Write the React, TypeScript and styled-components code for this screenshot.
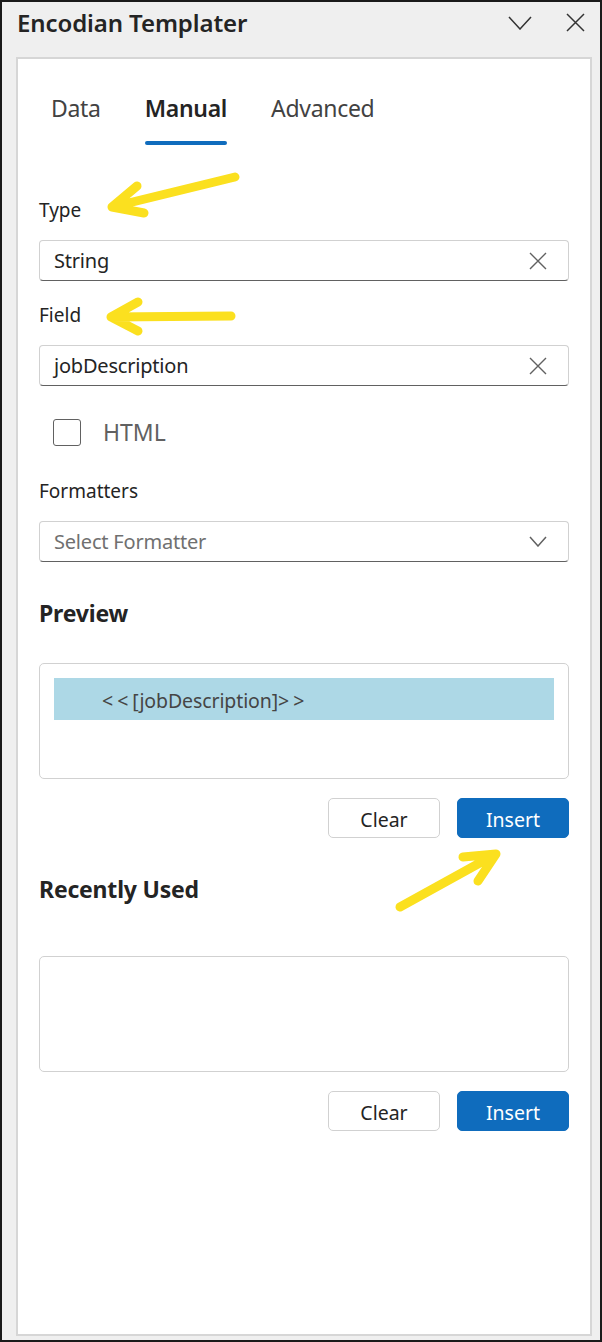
import styled, { createGlobalStyle } from "styled-components";

const GlobalStyle = createGlobalStyle`
  html, body {
    margin: 0;
    padding: 0;
    background: #ffffff;
  }
  body {
    font-family: "Noto Sans", "Open Sans", "Liberation Sans", sans-serif;
    color: #242424;
  }
  * { box-sizing: border-box; }
`;

const Frame = styled.div`
  position: relative;
  width: 602px;
  height: 1342px;
  border: 2px solid #1a1a1a;
  background: #efefef;
  display: flex;
  flex-direction: column;
`;

const TitleBar = styled.div`
  height: 55px;
  display: flex;
  align-items: center;
  justify-content: space-between;
  padding: 0 15px 14px 15px;
`;

const Title = styled.span`
  font-size: 24px;
  line-height: 32px;
  font-weight: 600;
  color: #242424;
  letter-spacing: -0.1px;
`;

const TitleActions = styled.div`
  display: flex;
  align-items: center;
  gap: 34px;
  color: #333333;
`;

const Panel = styled.div`
  flex: 1;
  margin: 0 8px 4px 14px;
  border: 2px solid #d6d6d6;
  background: #ffffff;
  padding: 0 21px;
  display: flex;
  flex-direction: column;
`;

const TabList = styled.div`
  display: flex;
  gap: 20px;
  padding-top: 32px;
`;

const Tab = styled.div<{ $active?: boolean }>`
  display: flex;
  flex-direction: column;
  padding: 0 12px;
  font-size: 23px;
  line-height: 34px;
  font-weight: ${(p) => (p.$active ? 600 : 400)};
  color: ${(p) => (p.$active ? "#242424" : "#424242")};
  letter-spacing: -0.3px;
`;

const Indicator = styled.div<{ $active?: boolean }>`
  height: 4px;
  margin-top: 16px;
  border-radius: 2px;
  background: ${(p) => (p.$active ? "#0f6cbd" : "transparent")};
`;

const Label = styled.div<{ $top: number }>`
  margin-top: ${(p) => p.$top}px;
  margin-bottom: 17px;
  font-size: 19px;
  line-height: 26px;
  color: #242424;
`;

const InputBox = styled.div`
  height: 41px;
  border: 1px solid #d1d1d1;
  border-bottom-color: #616161;
  border-radius: 4px;
  display: flex;
  align-items: center;
  justify-content: space-between;
  padding: 0 21px 0 14px;
  font-size: 20px;
`;

const InputText = styled.span<{ $muted?: boolean }>`
  color: ${(p) => (p.$muted ? "#707070" : "#242424")};
  letter-spacing: -0.2px;
`;

const CheckRow = styled.label`
  display: flex;
  align-items: center;
  gap: 22px;
  margin-top: 32px;
  padding-left: 14px;
  height: 28px;
  font-size: 23px;
  color: #616161;
`;

const CheckBox = styled.span`
  width: 28px;
  height: 27px;
  border: 1px solid #616161;
  border-radius: 3px;
`;

const Heading = styled.h2<{ $top: number }>`
  margin: ${(p) => p.$top}px 0 0;
  font-size: 23px;
  line-height: 30px;
  font-weight: 700;
  color: #242424;
  letter-spacing: -0.2px;
`;

const ResultBox = styled.div<{ $top: number }>`
  margin-top: ${(p) => p.$top}px;
  height: 116px;
  border: 1px solid #d1d1d1;
  border-radius: 5px;
  padding: 14px 14px;
`;

const Highlight = styled.div`
  height: 42px;
  background: #add8e6;
  display: flex;
  align-items: center;
  padding: 3px 0 0 48px;
  font-size: 19.5px;
  color: #454545;
  letter-spacing: -0.1px;
`;

const Brackets = styled.span`
  letter-spacing: 4px;
`;

const ButtonRow = styled.div`
  display: flex;
  justify-content: flex-end;
  gap: 17px;
  margin-top: 19px;
`;

const Button = styled.button<{ $primary?: boolean }>`
  width: 112px;
  height: 40px;
  border-radius: 5px;
  border: 1px solid ${(p) => (p.$primary ? "#0f6cbd" : "#d1d1d1")};
  background: ${(p) => (p.$primary ? "#0f6cbd" : "#ffffff")};
  color: ${(p) => (p.$primary ? "#ffffff" : "#242424")};
  font-family: inherit;
  font-size: 19.5px;
  padding: 2px 0 0;
`;

const Overlay = styled.svg`
  position: absolute;
  left: -2px;
  top: -2px;
  width: 602px;
  height: 1342px;
  pointer-events: none;
`;

const ClearIcon = () => (
  <svg width="18" height="18" viewBox="0 0 18 18">
    <path d="M1 1 L17 17 M17 1 L1 17" stroke="#616161" strokeWidth="1.4" fill="none" />
  </svg>
);

const Chevron = ({ w, h, color }: { w: number; h: number; color: string }) => (
  <svg width={w} height={h} viewBox={`0 0 ${w} ${h}`}>
    <path d={`M1 1 L${w / 2} ${h - 1} L${w - 1} 1`} stroke={color} strokeWidth="1.5" fill="none" />
  </svg>
);

const Arrow = ({ d }: { d: string }) => (
  <path d={d} stroke="#fbe01f" strokeWidth="9" strokeLinecap="round" strokeLinejoin="round" fill="none" />
);

export default function App() {
  return (
    <>
      <GlobalStyle />
      <Frame>
        <TitleBar>
          <Title>Encodian Templater</Title>
          <TitleActions>
            <Chevron w={24} h={14} color="#333" />
            <svg width="19" height="19" viewBox="0 0 19 19">
              <path d="M1 1 L18 18 M18 1 L1 18" stroke="#333" strokeWidth="1.5" fill="none" />
            </svg>
          </TitleActions>
        </TitleBar>
        <Panel>
          <TabList>
            <Tab>
              Data
              <Indicator />
            </Tab>
            <Tab $active>
              Manual
              <Indicator $active />
            </Tab>
            <Tab>
              Advanced
              <Indicator />
            </Tab>
          </TabList>

          <Label $top={52}>Type</Label>
          <InputBox>
            <InputText>String</InputText>
            <ClearIcon />
          </InputBox>

          <Label $top={21}>Field</Label>
          <InputBox>
            <InputText>jobDescription</InputText>
            <ClearIcon />
          </InputBox>

          <CheckRow>
            <CheckBox />
            HTML
          </CheckRow>

          <Label $top={32}>Formatters</Label>
          <InputBox>
            <InputText $muted>Select Formatter</InputText>
            <Chevron w={18} h={11} color="#616161" />
          </InputBox>

          <Heading $top={36}>Preview</Heading>
          <ResultBox $top={35}>
            <Highlight>
              <Brackets>&lt;&lt;</Brackets>[jobDescription]<Brackets>&gt;&gt;</Brackets>
            </Highlight>
          </ResultBox>
          <ButtonRow>
            <Button>Clear</Button>
            <Button $primary>Insert</Button>
          </ButtonRow>

          <Heading $top={36}>Recently Used</Heading>
          <ResultBox $top={52} />
          <ButtonRow>
            <Button>Clear</Button>
            <Button $primary>Insert</Button>
          </ButtonRow>
        </Panel>

        <Overlay viewBox="0 0 602 1342">
          <Arrow d="M235 177 L112 207 M137 186 L112 207 L144 213" />
          <Arrow d="M231 316 L111 317 M138 302 L111 317 L138 331" />
          <Arrow d="M400 907 L496 854 M463 857 L496 854 L478 881" />
        </Overlay>
      </Frame>
    </>
  );
}
